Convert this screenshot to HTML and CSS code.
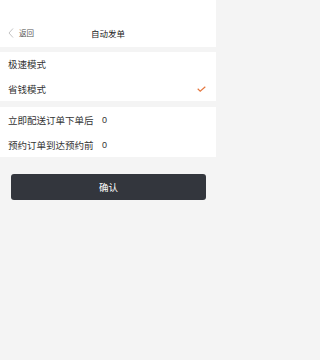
FILE: index.html
```html
<!DOCTYPE html>
<html lang="zh">
<head>
<meta charset="utf-8">
<link rel="stylesheet" href="styles.css">
</head>
<body>
<div class="page">
  <header class="header">
    <div class="nav">
      <div class="back">
        <svg class="chev" width="6" height="10" viewBox="0 0 6 10"><path d="M5 0.5 L1 5 L5 9.5" fill="none" stroke="#bdbdbd" stroke-width="0.9"/></svg>
        <span>返回</span>
      </div>
      <div class="title">自动发单</div>
      <div></div>
    </div>
  </header>
  <section class="group first">
    <div class="row r24"><span>极速模式</span></div>
    <div class="row r25"><span>省钱模式</span>
      <svg class="check" width="9" height="6" viewBox="0 0 9 6"><path d="M0.7 2.8 L3.2 5.1 L8.3 0.7" fill="none" stroke="#e5773f" stroke-width="1.2"/></svg>
    </div>
  </section>
  <section class="group second">
    <div class="row r25"><span class="label">立即配送订单下单后</span><span class="val">0</span></div>
    <div class="row r25"><span class="label">预约订单到达预约前</span><span class="val">0</span></div>
  </section>
  <div class="btnwrap"><button class="confirm">确认</button></div>
</div>
</body>
</html>
```
FILE: styles.css
```css
* { box-sizing: border-box; }
html, body { margin: 0; padding: 0; }
body {
  background: #f4f4f4;
  font-family: "Noto Sans CJK SC", "Noto Sans", sans-serif;
  color: #333;
}
.page {
  width: 216px;
  min-height: 360px;
  background: #f4f4f4;
}
.header {
  background: #fff;
  height: 47px;
  padding-top: 18px;
}
.nav {
  height: 29px;
  display: grid;
  grid-template-columns: 1fr auto 1fr;
  align-items: center;
}
.back {
  display: flex;
  align-items: center;
  padding-left: 8px;
  font-size: 7.5px;
  color: #555;
}
.chev { margin-right: 5px; }
.title {
  font-size: 8.5px;
  color: #222;
}
.group { background: #fff; }
.group.first { margin-top: 5px; }
.group.second { margin-top: 6px; }
.row {
  display: flex;
  align-items: center;
  padding: 0 8px;
  font-size: 9.5px;
  color: #333;
}
.r24 { height: 24px; }
.r25 { height: 25px; }
.check { margin-left: auto; margin-right: 2px; margin-top: 1px; }
.label { width: 94px; }
.val { font-family: "Liberation Sans", sans-serif; font-size: 9px; }
.btnwrap { padding: 17px 10px 0 11px; }
.confirm {
  display: block;
  width: 100%;
  height: 26px;
  border: none;
  border-radius: 3px;
  background: #33363d;
  color: #fff;
  font-family: "Noto Sans CJK SC", sans-serif;
  font-size: 9.5px;
  padding: 0;
}
```
